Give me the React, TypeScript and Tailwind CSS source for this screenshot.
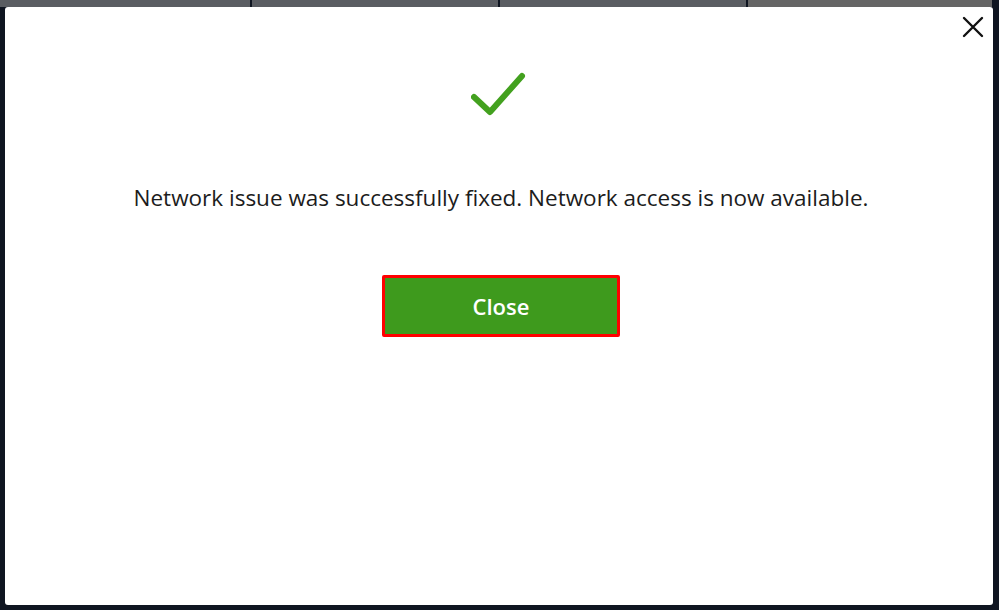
const TABS = ['w-[250px] bg-[#5a5d62]', 'w-[246px] bg-[#5a5d62]', 'w-[246px] bg-[#5a5d62]', 'flex-1 bg-[#656565]'];

export default function App() {
  return (
    <div className="relative h-[610px] w-[999px] overflow-hidden bg-[#0f1521]" style={{ fontFamily: '"Open Sans", "Noto Sans", sans-serif' }}>
      {/* page behind the dialog: tab strip */}
      <div className="flex h-[7px] w-[992px] gap-[2px]">
        {TABS.map((cls, i) => (
          <div key={i} className={cls} />
        ))}
      </div>

      {/* dialog */}
      <div className="absolute left-[5px] top-[7px] flex h-[598px] w-[988px] flex-col items-center rounded-[3px] bg-white pl-[4px]">
        <button className="absolute right-[9px] top-[9px] text-[#111]">
          <svg width="22" height="22" viewBox="0 0 22 22" fill="none" stroke="currentColor" strokeWidth="2.4" strokeLinecap="round">
            <path d="M2 2 L20 20 M20 2 L2 20" />
          </svg>
        </button>

        <svg width="60" height="48" viewBox="0 0 60 48" className="mt-[62px]" fill="none">
          <path d="M3 28 L19 43 L51 7" stroke="#43a11f" strokeWidth="6" strokeLinecap="round" strokeLinejoin="round" />
        </svg>

        <p className="mt-[66px] text-[22.5px] leading-[30px] text-[#1c1c1c]">
          Network issue was successfully fixed. Network access is now available.
        </p>

        <button className="mt-[62px] h-[62px] w-[238px] rounded-[2px] border-[3px] border-[#ff0000] bg-[#3e9a1d] text-[22px] font-semibold text-white">
          Close
        </button>
      </div>
    </div>
  );
}
